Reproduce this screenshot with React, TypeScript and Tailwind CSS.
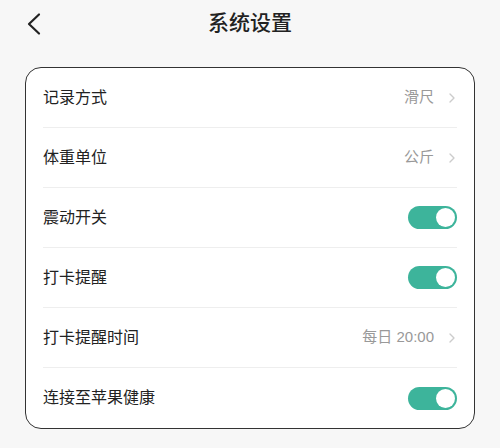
import { ChevronRight } from 'lucide-react';

type Row =
  | { label: string; kind: 'link'; value: string }
  | { label: string; kind: 'toggle'; on: boolean };

const rows: Row[] = [
  { label: '记录方式', kind: 'link', value: '滑尺' },
  { label: '体重单位', kind: 'link', value: '公斤' },
  { label: '震动开关', kind: 'toggle', on: true },
  { label: '打卡提醒', kind: 'toggle', on: true },
  { label: '打卡提醒时间', kind: 'link', value: '每日 20:00' },
  { label: '连接至苹果健康', kind: 'toggle', on: true },
];

function Toggle({ on }: { on: boolean }) {
  return (
    <div className={`w-[49px] h-[23px] rounded-full p-[2px] flex items-center ${on ? 'bg-[#3db49b] justify-end' : 'bg-gray-300 justify-start'}`}>
      <div className="w-[19px] h-[19px] rounded-full bg-white" />
    </div>
  );
}

export default function App() {
  return (
    <div className="w-[500px] h-[448px] bg-[#f7f7f7] font-['Liberation_Sans','Noto_Sans_CJK_SC',sans-serif] overflow-hidden">
      <div className="relative h-[50px] flex items-center justify-center">
        <button className="absolute left-[26px] top-[12px] text-[#222]">
          <svg width="16" height="24" viewBox="0 0 16 24" fill="none" stroke="currentColor" strokeWidth="2.2" strokeLinecap="round" strokeLinejoin="round">
            <polyline points="13,2.5 3,12 13,21.5" />
          </svg>
        </button>
        <h1 className="text-[21px] font-medium text-[#222] mt-[-4px]">系统设置</h1>
      </div>

      <div className="mx-[25px] mt-[17px] bg-white border-[1.5px] border-[#333] rounded-[16px] px-[17px]">
        {rows.map((r, i) => (
          <div key={r.label}
            className={`h-[60px] flex items-center justify-between ${i < rows.length - 1 ? 'border-b border-[#eeeeee]' : ''}`}>
            <span className="text-[16px] text-[#222]">{r.label}</span>
            {r.kind === 'link' ? (
              <div className="flex items-center gap-[10px] text-[#999]">
                <span className="text-[15px]">{r.value}</span>
                <ChevronRight size={16} strokeWidth={2} className="text-[#ccc] mr-[-3px]" />
              </div>
            ) : (
              <Toggle on={r.on} />
            )}
          </div>
        ))}
      </div>
    </div>
  );
}
